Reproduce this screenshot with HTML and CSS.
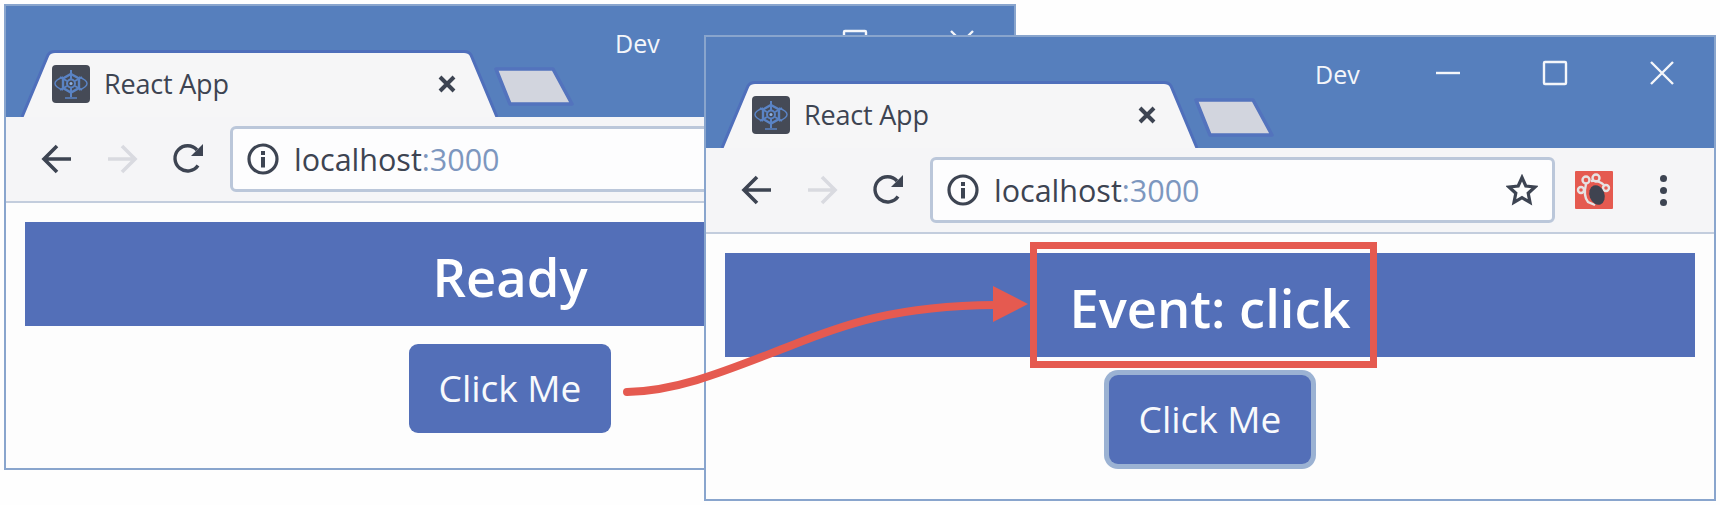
FILE: index.html
```html
<!DOCTYPE html>
<html lang="en">
<head>
    <meta charset="UTF-8">
    <meta name="viewport" content="width=device-width, initial-scale=1.0">
    <title>React App event demo</title>
    <link rel="stylesheet" href="styles.css">
</head>
<body>
    <!-- Shared icons -->
    <svg class="icon-defs" width="0" height="0" aria-hidden="true">
        <symbol id="i-tab" viewBox="0 0 477 67">
            <path d="M1 67 L27 5 Q29 1.5 34 1.5 L443 1.5 Q448 1.5 450 5 L476 67" fill="#f6f6f7" stroke="#4f6fbb" stroke-width="3"/>
        </symbol>
        <symbol id="i-newtab" viewBox="0 0 84 42">
            <path d="M5 4 L62 4 L81 39 L19 39 Z" fill="#d2d5de" stroke="#5373bd" stroke-width="3.500" stroke-linejoin="round"/>
        </symbol>
        <symbol id="i-favicon" viewBox="0 0 38 38">
            <rect width="38" height="38" rx="4" fill="#454a56"/>
            <g fill="none" stroke="#5a83c4">
                <path d="M11 12 Q3 15 3 18.500 Q3 22 11 25 M27 12 Q35 15 35 18.500 Q35 22 27 25" stroke-width="1.500"/>
                <path d="M19 9 L27 13.500 V23 L19 27.500 L11 23 V13.500 Z" stroke-width="2.400"/>
                <path d="M19 5 V14 M19 23 V32 M8 12 L15 16 M30 12 L23 16 M8 25 L15 21 M30 25 L23 21" stroke-width="2"/>
                <path d="M13 33 H25" stroke-width="1.500"/>
                <circle cx="19" cy="18.500" r="4" stroke-width="2"/>
            </g>
            <circle cx="19" cy="18.500" r="1.500" fill="#8db0e4"/>
        </symbol>
        <symbol id="i-close-tab" viewBox="0 0 18 18">
            <path d="M2 2 L16 16 M16 2 L2 16" stroke="#3d4452" stroke-width="4" fill="none"/>
        </symbol>
        <symbol id="i-back" viewBox="0 0 32 32">
            <path d="M30 16 H4 M16 3 L3 16 L16 29" stroke="currentColor" stroke-width="3.600" fill="none"/>
        </symbol>
        <symbol id="i-forward" viewBox="0 0 32 32">
            <path d="M2 16 H28 M16 3 L29 16 L16 29" stroke="currentColor" stroke-width="3.600" fill="none"/>
        </symbol>
        <symbol id="i-reload" viewBox="0 0 32 32">
            <path d="M26 22.500 A12.600 12.600 0 1 1 25 7" stroke="#3d4452" stroke-width="3.400" fill="none"/>
            <path d="M31 1 V13 H19 Z" fill="#3d4452"/>
        </symbol>
        <symbol id="i-info" viewBox="0 0 32 32">
            <circle cx="16" cy="16" r="14" stroke="#3d4452" stroke-width="3.200" fill="none"/>
            <rect x="14" y="14" width="4" height="10.500" fill="#3d4452"/>
            <rect x="14" y="8" width="4" height="4" fill="#3d4452"/>
        </symbol>
        <symbol id="i-star" viewBox="0 0 32 32">
            <path d="M16 3.500 L19.800 12 L29 13 L22.200 19.200 L24 28.400 L16 23.700 L8 28.400 L9.800 19.200 L3 13 L12.200 12 Z" stroke="#3d4452" stroke-width="3.200" fill="#fdfdfd"/>
        </symbol>
        <symbol id="i-ext" viewBox="0 0 38 38">
            <rect width="38" height="38" rx="1" fill="#e55a50"/>
            <g fill="none" stroke="#e6e3e3" stroke-width="2.400">
                <circle cx="11" cy="9" r="3.500"/>
                <circle cx="21" cy="7" r="3.500"/>
                <circle cx="31" cy="17" r="3"/>
                <circle cx="6" cy="19" r="3"/>
                <path d="M11 13 Q8 25 13 31 L20 34 M16 10 Q24 9 29 14"/>
            </g>
            <ellipse cx="22" cy="24" rx="7.500" ry="10" fill="#3f4350" transform="rotate(-20 22 24)"/>
        </symbol>
        <symbol id="i-min" viewBox="0 0 26 26">
            <path d="M1 13 H25" stroke="#f4f6fa" stroke-width="2.400"/>
        </symbol>
        <symbol id="i-max" viewBox="0 0 26 26">
            <rect x="2" y="2" width="22" height="22" rx="1" fill="none" stroke="#f4f6fa" stroke-width="2.400"/>
        </symbol>
        <symbol id="i-x" viewBox="0 0 26 26">
            <path d="M2 2 L24 24 M24 2 L2 24" stroke="#f4f6fa" stroke-width="2.400"/>
        </symbol>
    </svg>

    <!-- Window before the click -->
    <section class="window window-back">
        <div class="titlebar">
            <div class="tab">
                <svg class="tab-shape"><use href="#i-tab"/></svg>
                <svg class="favicon"><use href="#i-favicon"/></svg>
                <span class="tab-title">React App</span>
                <svg class="tab-close"><use href="#i-close-tab"/></svg>
            </div>
            <svg class="newtab"><use href="#i-newtab"/></svg>
            <span class="profile">Dev</span>
            <svg class="winctl winctl-min"><use href="#i-min"/></svg>
            <svg class="winctl winctl-max"><use href="#i-max"/></svg>
            <svg class="winctl winctl-x"><use href="#i-x"/></svg>
        </div>
        <div class="toolbar">
            <svg class="nav nav-back"><use href="#i-back"/></svg>
            <svg class="nav nav-forward"><use href="#i-forward"/></svg>
            <svg class="nav nav-reload"><use href="#i-reload"/></svg>
            <div class="omnibox">
                <svg class="nav"><use href="#i-info"/></svg>
                <span class="url">localhost<span class="url-port">:3000</span></span>
                <svg class="nav star"><use href="#i-star"/></svg>
            </div>
            <svg class="ext"><use href="#i-ext"/></svg>
            <div class="menu"><i></i><i></i><i></i></div>
        </div>
        <div class="content">
            <h1 class="banner">Ready</h1>
            <button class="btn">Click Me</button>
        </div>
    </section>

    <!-- Window after the click -->
    <section class="window window-front">
        <div class="titlebar">
            <div class="tab">
                <svg class="tab-shape"><use href="#i-tab"/></svg>
                <svg class="favicon"><use href="#i-favicon"/></svg>
                <span class="tab-title">React App</span>
                <svg class="tab-close"><use href="#i-close-tab"/></svg>
            </div>
            <svg class="newtab"><use href="#i-newtab"/></svg>
            <span class="profile">Dev</span>
            <svg class="winctl winctl-min"><use href="#i-min"/></svg>
            <svg class="winctl winctl-max"><use href="#i-max"/></svg>
            <svg class="winctl winctl-x"><use href="#i-x"/></svg>
        </div>
        <div class="toolbar">
            <svg class="nav nav-back"><use href="#i-back"/></svg>
            <svg class="nav nav-forward"><use href="#i-forward"/></svg>
            <svg class="nav nav-reload"><use href="#i-reload"/></svg>
            <div class="omnibox">
                <svg class="nav"><use href="#i-info"/></svg>
                <span class="url">localhost<span class="url-port">:3000</span></span>
                <svg class="nav star"><use href="#i-star"/></svg>
            </div>
            <svg class="ext"><use href="#i-ext"/></svg>
            <div class="menu"><i></i><i></i><i></i></div>
        </div>
        <div class="content">
            <h1 class="banner">Event: click</h1>
            <button class="btn btn-focus">Click Me</button>
        </div>
    </section>

    <!-- Callout drawn over both windows -->
    <div class="highlight"></div>
    <svg class="arrow" width="420" height="120" viewBox="0 0 420 120">
        <path d="M7 111 C 60 110, 110 88, 170 65 C 225 43, 275 25, 375 24" fill="none" stroke="#e55a50" stroke-width="8" stroke-linecap="round"/>
        <path d="M373 5 L373 41 L408 23 Z" fill="#e55a50"/>
    </svg>
</body>
</html>
```

FILE: styles.css
```css
/* General body styling */
body {
    position: relative;
    width: 1720px;
    height: 505px;
    margin: 0;
    overflow: hidden;
    background-color: #fefefe;
    font-family: "Open Sans", "Noto Sans", sans-serif;
    color: #3d4452;
}

.icon-defs {
    position: absolute;
}

/* Browser windows */
.window {
    position: absolute;
    display: flex;
    flex-direction: column;
    box-sizing: border-box;
    width: 1012px;
    height: 466px;
    border: 2px solid #89a5cd;
    background: #fdfdfd;
}

.window-back {
    left: 4px;
    top: 4px;
}

.window-front {
    left: 704px;
    top: 35px;
}

/* Title bar */
.titlebar {
    display: flex;
    align-items: flex-end;
    height: 111px;
    flex: none;
    padding-left: 15px;
    background: #567fbd;
}

.tab {
    position: relative;
    display: flex;
    align-items: center;
    box-sizing: border-box;
    width: 477px;
    height: 67px;
    padding: 0 0 0 31px;
}

.tab-shape {
    position: absolute;
    left: 0;
    top: 0;
    width: 477px;
    height: 67px;
}

.favicon {
    position: relative;
    width: 38px;
    height: 38px;
    flex: none;
}

.tab-title {
    position: relative;
    margin-left: 14px;
    font-size: 27px;
    line-height: 30px;
    letter-spacing: -0.2px;
}

.tab-close {
    position: relative;
    width: 18px;
    height: 18px;
    margin-left: auto;
    margin-right: 42px;
}

.newtab {
    width: 84px;
    height: 42px;
    flex: none;
    margin: 0 0 10px -7px;
}

.profile {
    align-self: flex-start;
    margin: 22px 2px 0 40px;
    font-size: 25px;
    line-height: 30px;
    color: #f4f6fa;
}

.winctl {
    align-self: flex-start;
    flex: none;
    width: 26px;
    height: 26px;
    margin-top: 23px;
}

.winctl-min {
    margin-left: 73px;
}

.winctl-max {
    margin-left: 81px;
}

.winctl-x {
    margin-left: 81px;
}

/* Toolbar with the address box */
.toolbar {
    display: flex;
    align-items: center;
    box-sizing: border-box;
    flex: none;
    height: 86px;
    padding-left: 35px;
    background: #f5f5f7;
    border-bottom: 2px solid #c3cddd;
    color: #3d4452;
}

.nav {
    width: 32px;
    height: 32px;
    flex: none;
}

.nav-forward {
    margin-left: 33px;
    color: #d9dae0;
}

.nav-reload {
    margin-left: 34px;
}

.omnibox {
    display: flex;
    align-items: center;
    box-sizing: border-box;
    width: 625px;
    height: 66px;
    margin-left: 26px;
    padding: 0 14px;
    background: #fdfdfe;
    border: 3px solid #bbc7da;
    border-radius: 6px;
}

.url {
    margin-left: 15px;
    font-size: 30.500px;
    line-height: 34px;
}

.url-port {
    color: #7d97bf;
}

.star {
    margin-left: auto;
}

.ext {
    width: 38px;
    height: 38px;
    flex: none;
    margin-left: 20px;
}

.menu {
    display: flex;
    flex-direction: column;
    gap: 5px;
    margin-left: 47px;
}

.menu i {
    display: block;
    width: 7px;
    height: 7px;
    border-radius: 50%;
    background: #3d4452;
}

/* Page content */
.content {
    display: flex;
    flex-direction: column;
    align-items: center;
    padding: 19px 19px 0;
}

.banner {
    box-sizing: border-box;
    width: 100%;
    height: 104px;
    margin: 0;
    padding-top: 8px;
    background: #536fb8;
    color: #fff;
    text-align: center;
    font-size: 52.500px;
    font-weight: 600;
    line-height: 93px;
}

.btn {
    width: 202px;
    height: 89px;
    margin-top: 18px;
    padding: 0 0 2px;
    border: 0;
    border-radius: 9px;
    background: #536fb8;
    color: #f8f9fc;
    font-family: inherit;
    font-size: 37px;
}

.btn-focus {
    box-shadow: 0 0 0 5px #9bb2d3;
}

/* Red callout box and arrow */
.highlight {
    position: absolute;
    left: 1030px;
    top: 242px;
    box-sizing: border-box;
    width: 347px;
    height: 126px;
    border: 7px solid #e55a50;
}

.arrow {
    position: absolute;
    left: 620px;
    top: 281px;
}
```
